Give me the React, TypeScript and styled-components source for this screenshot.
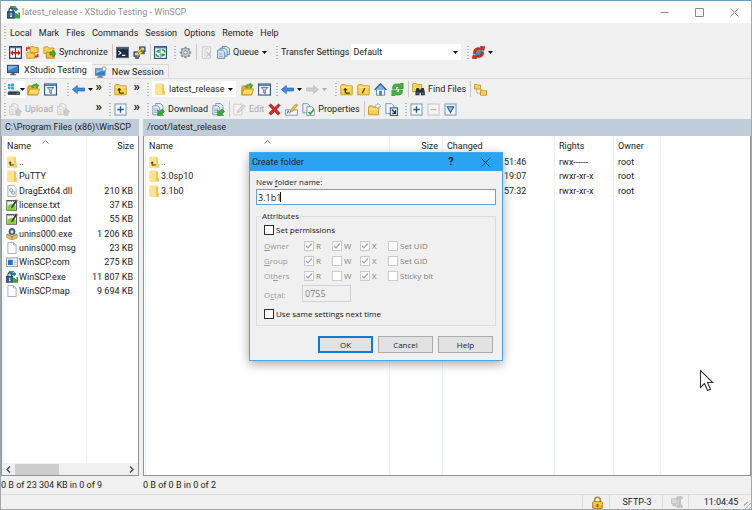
import React, { useId, useState } from 'react';
import styled, { createGlobalStyle, css } from 'styled-components';

const GlobalStyle = createGlobalStyle`
  *, *::before, *::after { box-sizing: border-box; }
  html, body { margin: 0; background: #a3a6aa; }
  body { font: 9px/12px Roboto, "Liberation Sans", sans-serif; color: #1c1c1c; cursor: default; }
  button, input, select { font: inherit; color: inherit; margin: 0; padding: 0; border: 0; border-radius: 0; background: none; }
  table { border-collapse: collapse; }
`;

/* ---------- icons ---------- */

const Svg = styled.svg<{ $size?: number }>`
  width: ${p => p.$size ?? 13}px;
  height: ${p => p.$size ?? 13}px;
  flex: none;
  display: block;
`;

const FOLDER = 'M1 3.5 2 2h4.5l1 1.5H15v11H1z';

const glyphs = {
  app: (
    <>
      <path d="M4 0h7v2H9v3H5V3H3z" fill="#3da63c" />
      <path d="M2.500 8V5a2.500 2.500 0 0 1 5 0v3" fill="none" stroke="#3a4a5c" strokeWidth="1.600" />
      <rect x="0.500" y="7" width="8.500" height="8" fill="#2c5f96" stroke="#1b3550" />
      <path d="M4 9h2l-.5 2 1 2.500h-3L4.500 11z" fill="#e8f0f8" />
      <path d="M9.500 15.500V9h2l2.500 2.500V8h2v7.500z" fill="#31a533" />
      <path d="M7 2.500h3.500V1L14 4l-3.500 3V5.500H7z" fill="#2f6fc2" />
    </>
  ),
  compare: (
    <>
      <rect x="0.800" y="0.800" width="14.400" height="14.400" fill="#fff" stroke="#27406b" strokeWidth="1.600" />
      <path d="M8 1v14" stroke="#27406b" strokeWidth="1.200" />
      <path d="M1 2h14" stroke="#4b74ad" strokeWidth="1.600" />
      <path d="M1.500 8.500 5 5V7.500h6V5l3.500 3.500L11 12V9.500H5V12z" fill="#d6201c" />
    </>
  ),
  syncDirs: (
    <>
      <path d="M5 1.500 6 .5h3.500l1 1.500H15v6H5z" fill="#f8d250" stroke="#c48a14" />
      <path d="M1 8.500l1-1h3.500l1 1.500H11v6H1z" fill="#f8d250" stroke="#c48a14" />
      <path d="M1 6V2.500h2.500" fill="none" stroke="#d3301f" strokeWidth="1.800" />
      <path d="M3 0l2.500 2.500L3 5z" fill="#d3301f" />
      <path d="M14.500 9.500V13H12" fill="none" stroke="#d3301f" strokeWidth="1.800" />
      <path d="M13 10.500 10.500 13l2.500 2.500z" fill="#d3301f" />
    </>
  ),
  sync: (
    <>
      <path d="M1 2l1-1h4l1 1.500h6.500V9H1z" fill="#f8d250" stroke="#c48a14" />
      <path d="M4 8.500l1-1h3l1 1.500h5v6H4z" fill="#f3bd33" stroke="#b97f10" />
      <path d="M8.500 7.500h3.500V5l4 4.500-4 4V11H8.500z" fill="#3fae3a" stroke="#1f7d22" strokeWidth=".8" />
    </>
  ),
  terminal: (
    <>
      <rect x="0.500" y="1.500" width="15" height="13" fill="#1d2c3d" stroke="#5c7388" />
      <path d="M1 2h14v2H1z" fill="#44586d" />
      <path d="M3 6l3 2.500L3 11M7.500 11.500h4" fill="none" stroke="#f4f7fa" strokeWidth="1.400" />
    </>
  ),
  putty: (
    <>
      <path d="M8 1h7v6H8zM10 8h4v1.500h-4z" fill="#3b5f96" stroke="#243b5d" strokeWidth=".8" />
      <path d="M1 7h7v6H1zM3 14h4v1.500H3z" fill="#3b5f96" stroke="#243b5d" strokeWidth=".8" />
      <path d="M9.300 2.300h4.400v3H9.300zM2.300 8.300h4.400v3H2.300z" fill="#c6dbef" />
      <path d="M12 1 4.500 8h3L4 14l8.500-7H9z" fill="#ffd520" stroke="#a87c00" strokeWidth=".6" />
    </>
  ),
  refreshPanes: (
    <>
      <rect x="0.700" y="0.700" width="14.600" height="14.600" fill="#fff" stroke="#2c4e86" strokeWidth="1.400" />
      <path d="M1 2h14" stroke="#4f7bbd" strokeWidth="2" />
      <path d="M8 3v12" stroke="#8ca5c8" />
      <path d="M7 3.500v5L2 7.500C3 5.500 4.500 5 5.500 5zM9 14V9l5 1c-1 2-2.500 2.500-3.500 2.500z" fill="#28a23a" />
      <path d="M2.500 9.500c0 2 1.500 3.500 4 3.500M13.500 8c0-2-1.500-3.500-4-3.500" fill="none" stroke="#28a23a" strokeWidth="1.800" />
    </>
  ),
  gear: (
    <>
      <path d="M8 1v14M1 8h14M3 3l10 10M13 3 3 13" stroke="#7f8b99" strokeWidth="2.600" />
      <circle cx="8" cy="8" r="5" fill="#c8ced6" stroke="#7f8b99" />
      <circle cx="8" cy="8" r="2.200" fill="#f0f0f0" stroke="#76828f" strokeWidth="1.200" />
    </>
  ),
  queueOff: (
    <>
      <path d="M3 1h10v14H3z" fill="#f1f1f1" stroke="#c3c3c3" />
      <path d="M5 3.500h6M5 6h3M5 8.500h2M5 11h2" stroke="#c9c9c9" />
      <path d="M8 7l5 6M13 7l-5 6" stroke="#c2c2c2" strokeWidth="1.400" />
    </>
  ),
  queue: (
    <>
      <path d="M6.500.7h6L15.300 3.500v7H6.500z" fill="#dce9f6" stroke="#4a76a8" />
      <path d="M3.700 2.700h6l2.800 2.800v7H3.700z" fill="#dce9f6" stroke="#4a76a8" />
      <path d="M.8 5h6l2.700 2.700v7.500H.8z" fill="#dce9f6" stroke="#4a76a8" />
      <path d="M2.500 9h5M2.500 11h5M2.500 13h5" stroke="#86a8cc" strokeWidth=".9" />
    </>
  ),
  globe: (
    <>
      <circle cx="8" cy="8" r="5.500" fill="#3d83cf" />
      <path d="M5 4l4-1 1 3-3 2-3 1zM8 9.500l4-1.500 1 2-3.500 3z" fill="#54b24a" />
      <path d="M1.800 9.500C1 5 4 1.800 8.500 2h2V0L16 .5 14.500 6 12.800 4.500C8 3 5 5 4.500 9z" fill="#d32a26" stroke="#96191a" strokeWidth=".5" />
      <path d="M14.200 7C15 11.500 12 14.500 7.500 14.200h-2V16L0 15.500 1.500 10.500l1.800 1.300C8 13.200 11 11 11.500 7.500z" fill="#d32a26" stroke="#96191a" strokeWidth=".5" />
    </>
  ),
  monitor: (
    <>
      <rect x="0.700" y="1.700" width="14.600" height="9.800" fill="#2f7fd3" stroke="#33475e" strokeWidth="1.300" />
      <path d="M1.500 2.500h13L1.500 8.500z" fill="#7ab7ee" />
      <path d="M6 12h4v1.500h2V15H4v-1.500h2z" fill="#4d5c6d" />
    </>
  ),
  monitorNew: (
    <>
      <rect x="0.700" y="3.700" width="12.600" height="8.600" fill="#2f7fd3" stroke="#6a7b90" strokeWidth="1.300" />
      <path d="M1.500 4.500h11L1.500 10z" fill="#8cc2f0" />
      <path d="M5 13h4v1h2v1.500H3V14h2z" fill="#6f7d8d" />
      <path d="M12 0v8M8 4h8M9.300 1.300l5.400 5.400M14.700 1.300 9.300 6.700" stroke="#7fa4c9" strokeWidth="1.300" />
      <circle cx="12" cy="4" r="2" fill="#fff" />
    </>
  ),
  drive: (
    <>
      <path d="M1 1.500 4 1v3H1zM4.700.9 8.500.3V4H4.700zM1 4.700h3v3L1 7.300zM4.700 4.700h3.800v3.700l-3.800-.6z" fill="#1fa8e8" />
      <path d="M2.500 9.500h12L16 11v3.500H1V11z" fill="#7b848e" />
      <path d="M1 11h15v3.500H1z" fill="#39424c" />
      <path d="M12 12h2.500v1.300H12z" fill="#52d95a" />
    </>
  ),
  openFolder: (
    <>
      <path d="M1 5l1-1.500h4L7 5h6v9.500H1z" fill="#eeb52c" stroke="#b98412" />
      <path d="M3.500 7.500h12L13 14.500H1z" fill="#fbdc62" stroke="#c08a14" />
      <path d="M5.500 5C6 2 9 .8 11 1.800V.3L15 3l-3.500 3V4.300C10 3.300 8 3.700 7.500 5.500z" fill="#48b53e" stroke="#23831f" strokeWidth=".6" />
    </>
  ),
  filter: (
    <>
      <rect x="0.700" y="1.200" width="14.600" height="13.600" fill="#f6fafe" stroke="#33598c" strokeWidth="1.400" />
      <path d="M1 2.700h14" stroke="#4c7cb8" strokeWidth="2" />
      <path d="M4 5.500h8L9 9v4l-2-1V9z" fill="#c6d4e4" stroke="#45607f" />
    </>
  ),
  back: <path d="M.5 8 6.500 3v3.200H15.500v3.600H6.500V13z" fill="#3c8ce4" stroke="#1c5dab" strokeWidth=".8" />,
  forwardOff: <path d="M15.500 8 9.500 3v3.200H.5v3.600h9V13z" fill="#cfcfcf" stroke="#b3b3b3" strokeWidth=".8" />,
  folderUp: (
    <>
      <path d={FOLDER} fill="#fbd44f" stroke="#c48a14" />
      <path d="M1.500 5h13" stroke="#fff0b0" />
      <path d="M7 12.500h5M6.500 12.500V8" fill="none" stroke="#3b2c00" strokeWidth="1.500" />
      <path d="M3.800 9 6.500 5.800 9.200 9z" fill="#3b2c00" />
    </>
  ),
  folderRoot: (
    <>
      <path d={FOLDER} fill="#fbd44f" stroke="#c48a14" />
      <path d="M1.500 5h13" stroke="#fff0b0" />
      <path d="M9.500 6.500 6.500 12.500" stroke="#3b2c00" strokeWidth="1.400" />
    </>
  ),
  home: (
    <>
      <path d="M3 7.500h10V15H3z" fill="#f4f8fc" stroke="#4a6b92" />
      <path d="M.7 8.500 8 1l7.300 7.500" fill="#7db0e4" stroke="#2d5b94" strokeWidth="1.600" />
      <path d="M6.500 9.500h3V15h-3z" fill="#2f74bf" />
    </>
  ),
  refresh: (
    <>
      <path d="M2 7.500V5.500C2 2.500 4 1.200 7 1.200h3.500L12.500 0 15 0v7H8l2.500-2.500H7.500c-1.500 0-2 .8-2 3z" fill="#44b53c" stroke="#218420" strokeWidth=".7" />
      <path d="M14 8.500v2c0 3-2 4.300-5 4.300H5.500L3.500 16H1V9h7l-2.500 2.500h3c1.500 0 2-.8 2-3z" fill="#44b53c" stroke="#218420" strokeWidth=".7" />
    </>
  ),
  find: (
    <>
      <path d="M.5 2l1-1.500h4l1 1.500H12v8.500H.5z" fill="#fbd44f" stroke="#c48a14" />
      <path d="M5.500 6h3l.7 2h1.600l.7-2h3l1.300 5.500V15h-5v-3H9.200v3h-5v-3.500z" fill="#2b3440" />
      <path d="M5.500 12.500h2.300M12.200 12.500h2.300" stroke="#8fa5ba" />
    </>
  ),
  tree: (
    <>
      <path d="M3.500 8v4.500H8" fill="none" stroke="#777" strokeDasharray="1.500 1" />
      <path d="M.7 1.500h2.500l1 1H8V7.500H.7z" fill="#fbd44f" stroke="#c48a14" />
      <path d="M8 8.500h2.500l1 1h4V15H8z" fill="#fbd44f" stroke="#c48a14" />
    </>
  ),
  uploadOff: (
    <>
      <path d="M3.500 1h5L11 3.500V11H3.500z" fill="#f5f5f5" stroke="#bdbdbd" />
      <path d="M1 4h5l2.500 2.500V14H1z" fill="#f5f5f5" stroke="#bdbdbd" />
      <path d="M2.500 8h4M2.500 10h4M2.500 12h4" stroke="#ccc" />
      <path d="M11.500 6.500 15.500 11H13.500v4.500h-4V11H8z" fill="#cdcdcd" stroke="#b5b5b5" strokeWidth=".7" />
    </>
  ),
  download: (
    <>
      <path d="M4.500.7h6L13.500 3.500V11h-9z" fill="#e6eff8" stroke="#6488b0" />
      <path d="M1 3.500h6L9.500 6v8.500H1z" fill="#e6eff8" stroke="#6488b0" />
      <path d="M2.500 7.500h5M2.500 9.500h5M2.500 11.500h4" stroke="#7c9fc4" />
      <path d="M7 15.500V8.500l2.200 2.200L12.500 7.500l3 3-3.300 3 2 2z" fill="#37ab34" stroke="#1c7c1e" strokeWidth=".7" />
    </>
  ),
  editOff: (
    <>
      <path d="M1 1.500h10v13H1z" fill="#f6f6f6" stroke="#c4c4c4" />
      <path d="M5 12l1-3 7-7 2.200 2L8 11z" fill="#dcdcdc" stroke="#b5b5b5" strokeWidth=".8" />
    </>
  ),
  del: <path d="M1 3 3.500 1 8 5.700 13 1l2 2-4.500 5 4.500 4.500-2.500 2.500L8 10.500 3.500 15 1 12.700 5.500 8z" fill="#d62a22" stroke="#a3140f" strokeWidth=".6" />,
  rename: (
    <>
      <rect x="0.500" y="8.500" width="15" height="6.500" fill="#f2f6fb" stroke="#6a8bb3" />
      <path d="M2.500 13l1.500-3.500L5.500 13" fill="none" stroke="#3f5f88" />
      <path d="M6.500 11.500 7.500 8l6-7 2 1.800-5.700 7z" fill="#f6c044" stroke="#a9761b" strokeWidth=".8" />
    </>
  ),
  props: (
    <>
      <path d="M1 .8h6L9.500 3.500V12H1z" fill="#e9f1f9" stroke="#6488b0" />
      <path d="M6 4.500h6L15 7.500v8H6z" fill="#f4f8fc" stroke="#6488b0" />
      <path d="M8 11l2.200 2.500L14.500 8" fill="none" stroke="#2ea52e" strokeWidth="2" />
    </>
  ),
  newFolder: (
    <>
      <path d="M.7 5l1-1.500h4l1 1.500H13v9.500H.7z" fill="#fbd44f" stroke="#c48a14" />
      <path d="M1 7.500h12" stroke="#fff0b0" />
      <path d="M12 0v8M8 4h8M9.300 1.300l5.400 5.400M14.700 1.300 9.300 6.700" stroke="#86a8c9" strokeWidth="1.200" />
      <circle cx="12" cy="4" r="1.800" fill="#fff" />
    </>
  ),
  newLink: (
    <>
      <path d="M1 .8h7l3 3V13H1z" fill="#f2f6fb" stroke="#6488b0" />
      <rect x="6.500" y="6" width="9" height="9.300" fill="#dfe9f4" stroke="#34527c" strokeWidth="1.200" />
      <path d="M8.500 8l4 4M13 8.700v4H9" fill="none" stroke="#1d2f4c" strokeWidth="1.400" />
    </>
  ),
  plus: (
    <>
      <rect x="1.200" y="1.200" width="13.600" height="13.600" fill="#f9fcff" stroke="#6b93bd" strokeWidth="1.200" />
      <path d="M8 4v8M4 8h8" stroke="#24578f" strokeWidth="1.700" />
    </>
  ),
  minusOff: (
    <>
      <rect x="1.200" y="1.200" width="13.600" height="13.600" fill="#f4f4f4" stroke="#c3c3c3" strokeWidth="1.200" />
      <path d="M4.500 8h7" stroke="#b0b0b0" strokeWidth="1.500" />
    </>
  ),
  invert: (
    <>
      <rect x="1.200" y="1.200" width="13.600" height="13.600" fill="#f4f8fc" stroke="#6b93bd" strokeWidth="1.200" />
      <path d="M4 4.500h8L8 12z" fill="#a9c2dc" stroke="#24578f" strokeWidth="1.300" />
    </>
  ),
  paleFolder: (
    <>
      <path d="M2 1h10l1.500 1.500V10l1.500 1v4.500H2z" fill="#f5cf62" />
      <path d="M2 1h8.500v14.500H2z" fill="#fde293" />
      <path d="M12 2.500V15" stroke="#e9b93d" />
    </>
  ),
  paleUp: (
    <>
      <path d="M2 1h10l1.500 1.500V10l1.500 1v4.500H2z" fill="#f5cf62" />
      <path d="M2 1h8.500v14.500H2z" fill="#fde293" />
      <path d="M5.500 12h5M5.500 12.500V9" fill="none" stroke="#3b2c00" strokeWidth="1.300" />
      <path d="M3.500 9.500l2-2.500 2 2.500z" fill="#3b2c00" />
    </>
  ),
  dll: (
    <>
      <path d="M2.500.7h8L13.500 4v11.300h-11z" fill="#f8f8f8" stroke="#9a9a9a" />
      <circle cx="7" cy="7" r="2.200" fill="#dfe7ee" stroke="#7d93a8" />
      <circle cx="9.500" cy="10.500" r="2.200" fill="#dfe7ee" stroke="#7d93a8" />
    </>
  ),
  note: (
    <>
      <rect x="1" y="2" width="13" height="13" fill="#fbfbf6" stroke="#4a5548" strokeWidth="1.200" />
      <path d="M2 2.500h11" stroke="#4a5548" strokeWidth="2" strokeDasharray="1.500 1" />
      <path d="M2 9l5-3 6 3v5.500H2z" fill="#8bcf34" />
      <path d="M6.500 12.500 7.500 9.500 13 1l2 1.300L9.500 11z" fill="#3a3a33" />
      <path d="M12.300 2 13.300.3l2.500 1.600L14.800 3.500z" fill="#e0452b" />
    </>
  ),
  installer: (
    <>
      <path d="M1 8.500 8 6l7 2.500v4.500l-7 3-7-3z" fill="#e2bd78" stroke="#997437" strokeWidth=".7" />
      <path d="M1 8.500l7 3 7-3M8 11.500V16" fill="none" stroke="#8c6a31" strokeWidth=".8" />
      <circle cx="8" cy="4.500" r="4" fill="#4c6e95" stroke="#2a4361" />
      <path d="M6.500 4.500a1.500 1.500 0 0 1 3 0V7h-3z" fill="#e6edf5" />
    </>
  ),
  blank: (
    <>
      <path d="M2.500.7h7.500L13.500 4v11.300h-11z" fill="#fdfdfd" stroke="#9b9b9b" />
      <path d="M10 .7V4h3.500" fill="none" stroke="#9b9b9b" />
    </>
  ),
  com: (
    <>
      <rect x="0.600" y="2.600" width="14.800" height="11.300" fill="#fdfdfd" stroke="#8d949b" strokeWidth="1.200" />
      <rect x="2.500" y="5" width="6.500" height="7" fill="#1b73cf" />
      <path d="M10 6.500h4M10 8.700h4M10 11h4" stroke="#8aa7c5" />
    </>
  ),
  lock: (
    <>
      <path d="M4.500 8V5a3.500 3.500 0 0 1 7 0v3" fill="none" stroke="#b98a1c" strokeWidth="2" />
      <rect x="2" y="7" width="12" height="8.500" rx="1" fill="#f3b71e" stroke="#a87408" />
      <path d="M2.800 8.500h10.400M2.800 10.500h3M10 10.500h3" stroke="#fbdf78" />
      <path d="M7 10h2v3.500H7z" fill="#7b5203" />
    </>
  ),
  compressOff: (
    <>
      <path d="M.8 3.500h7.500v7H.8zM2.500 11.500h4V13h-4z" fill="#d8d8d8" stroke="#b5b5b5" />
      <path d="M8 1h7v2.500L12.500 5v6l2.500 1.500V15H8v-2.500L10.500 11V5L8 3.500z" fill="#c9c9c9" stroke="#a9a9a9" strokeWidth=".8" />
    </>
  ),
};

type GlyphName = keyof typeof glyphs;

const Icon = ({ name, size }: { name: GlyphName; size?: number }) => (
  <Svg $size={size} viewBox="0 0 16 16" aria-hidden="true">{glyphs[name]}</Svg>
);

const ArrowSvg = styled.svg`
  width: 5px;
  height: 3px;
  flex: none;
  display: block;
`;
const Caret = ({ off }: { off?: boolean }) => (
  <ArrowSvg viewBox="0 0 5 3" aria-hidden="true"><path d="M0 0h5L2.500 3z" fill={off ? '#aaa' : '#111'} /></ArrowSvg>
);

/* ---------- window frame ---------- */

const Window = styled.main`
  position: relative;
  display: flex;
  flex-direction: column;
  min-height: calc(100vh - 1px);
  margin: 0 1px 1px;
  background: #f0f0f0;
  border-top: 1px solid #6c9cbc;
`;

const TitleBar = styled.header`
  display: flex;
  align-items: center;
  gap: 2px;
  height: 22px;
  padding-left: 6px;
  background: #fff;
  color: #8f8f8f;
`;
const Title = styled.h1`
  flex: 1;
  margin: 0;
  font: inherit;
`;
const CaptionButton = styled.button`
  display: grid;
  place-items: center;
  width: 33px;
  height: 22px;
`;
const CaptionSvg = styled.svg`
  width: 9px;
  height: 9px;
  fill: none;
  stroke: #8a8a8a;
`;

const MenuBar = styled.nav`
  display: flex;
  align-items: center;
  height: 19px;
  padding-left: 2px;
`;
const MenuButton = styled.button`
  padding: 0 4px 0 3px;
`;

const ToolRow = styled.div`
  display: flex;
  align-items: center;
  height: 20px;
`;
const Band = styled.div<{ $width?: number }>`
  display: flex;
  align-items: center;
  flex: none;
  height: 20px;
  padding-left: 2px;
  ${p => p.$width ? css`width: ${p.$width}px;` : css`flex: 1;`}
`;
const Grip = styled.span`
  flex: none;
  width: 2px;
  height: 13px;
  margin: 0 1px;
  background: repeating-linear-gradient(#b9b9b9 0 1px, transparent 1px 3px);
`;
const ToolButton = styled.button<{ $field?: boolean }>`
  display: flex;
  align-items: center;
  flex: none;
  gap: 3px;
  height: 17px;
  padding: 0 2px;
  white-space: nowrap;
  ${p => p.$field && css`
    gap: 0;
    padding: 0;
    background: #fff;
  `}
  &:disabled { color: #a8a8a8; }
`;
const Separator = styled.span`
  flex: none;
  width: 1px;
  height: 16px;
  margin: 0 1px 0 2px;
  background: #c6c6c6;
`;
const More = styled.button`
  height: 17px;
  margin-left: auto;
  padding: 0 4px 6px 0;
  font: bold 13px/11px Roboto, sans-serif;
`;

interface ToolProps { icon: GlyphName; label?: string; title?: string; off?: boolean; drop?: boolean; field?: boolean }
const Tool = ({ icon, label, title, off, drop, field }: ToolProps) => (
  <ToolButton type="button" disabled={off} aria-label={label ?? title} $field={field}>
    <Icon name={icon} />
    {label}
    {drop && <Caret off={off} />}
  </ToolButton>
);

const Combo = styled.div<{ $width: number }>`
  display: flex;
  align-items: center;
  width: ${p => p.$width}px;
  height: 16px;
  margin: 0 3px 0 2px;
  padding: 0 3px 0 2px;
  gap: 3px;
  background: #fff;
`;
const ComboSelect = styled.select`
  appearance: none;
  flex: 1;
  min-width: 0;
  height: 14px;
  outline: none;
`;
const ComboLabel = styled.label`
  padding: 0 0 0 2px;
  white-space: nowrap;
`;

const Tabs = styled.div`
  display: flex;
  align-items: flex-end;
  height: 17px;
  border-bottom: 1px solid #dcdcdc;
`;
const Tab = styled.button<{ $active?: boolean }>`
  display: flex;
  align-items: center;
  gap: 5px;
  height: 14px;
  padding: 0 4px 0 3px;
  border: 1px solid #dadada;
  border-width: 1px 1px 0 0;
  ${p => p.$active && css`
    height: 16px;
    padding: 0 5px 0 6px;
    background: #fff;
    border-width: 0;
  `}
`;

/* ---------- file panels ---------- */

const Panels = styled.div`
  display: flex;
  flex: 1;
  gap: 4px;
`;
const Panel = styled.section<{ $width?: number }>`
  display: flex;
  flex-direction: column;
  ${p => p.$width ? css`flex: 0 0 ${p.$width}px;` : css`flex: 1; min-width: 0;`}
`;
const PathBar = styled.h2`
  margin: 0;
  height: 17px;
  padding: 0 4px;
  font: inherit;
  line-height: 17px;
  background: #bfcddb;
  white-space: nowrap;
`;
const ListBox = styled.div`
  display: flex;
  flex-direction: column;
  flex: 1;
  border: 1px solid #8f949c;
  border-top: 0;
  background: #fff;
`;
const Columns = styled.div<{ $stops: number[] }>`
  flex: 1;
  background-image: ${p => p.$stops.map(() => 'linear-gradient(#e9f2fb, #e9f2fb)').join(',')};
  background-size: 1px 100%;
  background-repeat: no-repeat;
  background-position: ${p => p.$stops.map(s => `${s}px 0`).join(',')};
`;
const FileTable = styled.table`
  table-layout: fixed;
  width: 100%;
`;
const HeadCell = styled.th<{ $right?: boolean }>`
  height: 19px;
  padding: 0 4px 0 5px;
  font-weight: normal;
  text-align: ${p => (p.$right ? 'right' : 'left')};
`;
const SortMark = styled.svg`
  display: block;
  width: 7px;
  height: 4px;
  margin: 0 auto -4px;
  fill: none;
  stroke: #7a7a7a;
`;
const FileRows = styled.tbody<{ $height: number }>`
  height: ${p => p.$height}px;
`;
const Cell = styled.td<{ $right?: boolean; $indent?: number }>`
  height: 14px;
  padding: 0 5px 0 ${p => p.$indent ?? 4}px;
  text-align: ${p => (p.$right ? 'right' : 'left')};
  white-space: nowrap;
  line-height: 14px;
`;
const FileName = styled.span`
  display: flex;
  align-items: center;
  gap: 1px;
  height: 14px;
`;
const Col = styled.col<{ $width?: number }>`
  ${p => p.$width && css`width: ${p.$width}px;`}
`;
const PanelStatus = styled.p`
  margin: 0;
  height: 18px;
  line-height: 19px;
  white-space: nowrap;
`;

const ScrollBar = styled.div`
  display: flex;
  align-items: center;
  height: 12px;
  background: #f0f0f0;
`;
const ScrollButton = styled.button`
  display: grid;
  place-items: center;
  width: 13px;
  height: 12px;
`;
const ScrollTrack = styled.div`
  flex: 1;
`;
const ScrollThumb = styled.div`
  width: 40%;
  height: 11px;
  background: #cdcdcd;
`;
const ChevronSvg = styled.svg`
  width: 5px;
  height: 7px;
  fill: none;
  stroke: #4d4d4d;
  stroke-width: 1.500;
`;

const StatusBar = styled.footer`
  display: flex;
  height: 15px;
  gap: 2px;
  border-top: 1px solid #dcdcdc;
`;
const StatusCell = styled.div<{ $width?: number }>`
  display: grid;
  place-items: center;
  height: 14px;
  border-right: 1px solid #dcdcdc;
  ${p => p.$width ? css`width: ${p.$width}px;` : css`flex: 1;`}
`;
const ClockCell = styled(StatusCell)`
  border-right: 0;
  background: repeating-linear-gradient(135deg, transparent 0 2px, #aaa 2px 3px) no-repeat right bottom / 7px 7px;
`;

/* ---------- dialog ---------- */

const Overlay = styled.div`
  position: absolute;
  top: 151px;
  left: 0;
  right: 0;
  display: flex;
  justify-content: center;
  pointer-events: none;
`;
const Dialog = styled.form`
  width: 254px;
  pointer-events: auto;
  border: 1px solid #3fa9ea;
  background: #f0f0f0;
  box-shadow: 0 3px 10px rgba(0, 0, 0, 0.35);
  font: 8px/10px "Open Sans", "Noto Sans", sans-serif;
`;
const DialogTitle = styled.header`
  display: flex;
  align-items: center;
  height: 18px;
  background: #2aa4f1;
  font: 9px/12px Roboto, sans-serif;
  padding-left: 2px;
`;
const DialogCaption = styled.button`
  display: grid;
  place-items: center;
  width: 34px;
  height: 18px;
  font-weight: bold;
  font-size: 11px;
`;
const DialogBody = styled.div`
  display: flex;
  flex-direction: column;
  padding: 5px 6px 7px 6px;
`;
const NameLabel = styled.label`
  line-height: 12px;
`;
const NameInput = styled.input`
  height: 16px;
  margin: 1px 0 5px;
  padding: 0 1px;
  border: 1px solid #62a5dd;
  background: linear-gradient(#111, #111) no-repeat 23px 2px / 1px 10px #fff;
  caret-color: transparent;
  outline: none;
  font-size: 9px;
`;
const Group = styled.fieldset`
  margin: 0 0 10px;
  padding: 0 6px 4px 7px;
  border: 1px solid #dcdcdc;
  min-width: 0;
`;
const Legend = styled.legend`
  margin-left: -3px;
  padding: 0 1px;
  line-height: 12px;
`;
const CheckLabel = styled.label<{ $off?: boolean }>`
  display: flex;
  align-items: center;
  gap: 2px;
  height: 15px;
  color: ${p => (p.$off ? '#7f7f7f' : '#111')};
`;
const TickWrap = styled.span`
  display: grid;
  & > * { grid-area: 1 / 1; }
`;
const TickBox = styled.input`
  appearance: none;
  width: 10px;
  height: 10px;
  border: 1px solid #2f2f2f;
  background: #fff;
  &:disabled { border-color: #cbcbcb; }
  & + svg { visibility: hidden; }
  &:checked + svg { visibility: visible; }
`;
const TickSvg = styled.svg<{ $off?: boolean }>`
  width: 10px;
  height: 10px;
  fill: none;
  stroke: ${p => (p.$off ? '#a2a2a2' : '#222')};
  stroke-width: 1.200;
  pointer-events: none;
`;
const RightsGrid = styled.div`
  display: grid;
  grid-template-columns: 40px 28px 28px 28px 1fr;
  align-items: center;
  padding-top: 1px;
  color: #9a9a9a;
`;
const OctalInput = styled.input`
  width: 49px;
  height: 17px;
  margin: 2px 0 4px -2px;
  padding: 0 2px;
  border: 1px solid #d2d2d2;
  color: #7f7f7f;
  font-size: 9px;
`;
const Actions = styled.div`
  display: flex;
  justify-content: flex-end;
  gap: 5px;
  padding-right: 3px;
`;
const PushButton = styled.button<{ $primary?: boolean }>`
  width: 55px;
  height: 17px;
  border: 1px solid #ababab;
  background: #e2e2e2;
  ${p => p.$primary && css`border: 2px solid #0f79d6;`}
`;

const Pointer = styled.svg`
  position: absolute;
  left: 697px;
  top: 367px;
  width: 16px;
  height: 25px;
  pointer-events: none;
`;

const Check = ({ label, checked, off }: { label: string; checked?: boolean; off?: boolean }) => (
  <CheckLabel $off={off}>
    <TickWrap>
      <TickBox type="checkbox" defaultChecked={checked} disabled={off} />
      <TickSvg $off={off} viewBox="0 0 10 10"><path d="M2 5l2 2 4-4.500" /></TickSvg>
    </TickWrap>
    {label}
  </CheckLabel>
);

/* ---------- data ---------- */

const menus = ['Local', 'Mark', 'Files', 'Commands', 'Session', 'Options', 'Remote', 'Help'];

const localFiles: { icon: GlyphName; name: string; size: string }[] = [
  { icon: 'paleUp', name: '..', size: '' },
  { icon: 'paleFolder', name: 'PuTTY', size: '' },
  { icon: 'dll', name: 'DragExt64.dll', size: '210 KB' },
  { icon: 'note', name: 'license.txt', size: '37 KB' },
  { icon: 'note', name: 'unins000.dat', size: '55 KB' },
  { icon: 'installer', name: 'unins000.exe', size: '1 206 KB' },
  { icon: 'blank', name: 'unins000.msg', size: '23 KB' },
  { icon: 'com', name: 'WinSCP.com', size: '275 KB' },
  { icon: 'app', name: 'WinSCP.exe', size: '11 807 KB' },
  { icon: 'blank', name: 'WinSCP.map', size: '9 694 KB' },
];

const remoteFiles: { icon: GlyphName; name: string; changed: string; rights: string }[] = [
  { icon: 'paleUp', name: '..', changed: '51:46', rights: 'rwx------' },
  { icon: 'paleFolder', name: '3.0sp10', changed: '19:07', rights: 'rwxr-xr-x' },
  { icon: 'paleFolder', name: '3.1b0', changed: '57:32', rights: 'rwxr-xr-x' },
];

const rights = [
  { who: <><u>O</u>wner</>, bits: [true, true, true], special: 'Set UID' },
  { who: <><u>G</u>roup</>, bits: [true, false, true], special: 'Set GID' },
  { who: <>Ot<u>h</u>ers</>, bits: [true, false, true], special: 'Sticky bit' },
];

const Sort = () => <SortMark viewBox="0 0 7 4" aria-hidden="true"><path d="M.5 3.500l3-3 3 3" /></SortMark>;

function CreateFolderDialog() {
  const nameId = useId();
  const octalId = useId();
  const [name, setName] = useState('3.1b1');
  return (
    <Overlay>
      <Dialog role="dialog" aria-label="Create folder" onSubmit={e => e.preventDefault()}>
        <DialogTitle>
          <Title>Create folder</Title>
          <DialogCaption type="button" aria-label="Context help">?</DialogCaption>
          <DialogCaption type="button" aria-label="Close">
            <Svg $size={9} viewBox="0 0 9 9"><path d="M.5.5l8 8M8.500.5l-8 8" stroke="#10202c" /></Svg>
          </DialogCaption>
        </DialogTitle>
        <DialogBody>
          <NameLabel htmlFor={nameId}>New <u>f</u>older name:</NameLabel>
          <NameInput id={nameId} value={name} onChange={e => setName(e.target.value)} autoFocus />
          <Group>
            <Legend>Attributes</Legend>
            <Check label="Set permissions" />
            <RightsGrid>
              {rights.map(row => (
                <React.Fragment key={row.special}>
                  <span>{row.who}</span>
                  {row.bits.map((on, i) => <Check key={i} label={'RWX'[i]} checked={on} off />)}
                  <Check label={row.special} off />
                </React.Fragment>
              ))}
              <label htmlFor={octalId}>O<u>c</u>tal:</label>
              <OctalInput id={octalId} defaultValue="0755" disabled />
            </RightsGrid>
            <Check label="Use same settings next time" />
          </Group>
          <Actions>
            <PushButton type="submit" $primary>OK</PushButton>
            <PushButton type="button">Cancel</PushButton>
            <PushButton type="button">Help</PushButton>
          </Actions>
        </DialogBody>
      </Dialog>
    </Overlay>
  );
}

export default function App() {
  const transferId = useId();
  return (
    <>
      <GlobalStyle />
      <Window>
        <TitleBar>
          <Icon name="app" />
          <Title>latest_release - XStudio Testing - WinSCP</Title>
          <CaptionButton type="button" aria-label="Minimize"><CaptionSvg viewBox="0 0 9 9"><path d="M.5 4.500h8" /></CaptionSvg></CaptionButton>
          <CaptionButton type="button" aria-label="Maximize"><CaptionSvg viewBox="0 0 9 9"><path d="M.5.5h8v8h-8z" /></CaptionSvg></CaptionButton>
          <CaptionButton type="button" aria-label="Close"><CaptionSvg viewBox="0 0 9 9"><path d="M.5.5l8 8M8.500.5l-8 8" /></CaptionSvg></CaptionButton>
        </TitleBar>

        <MenuBar>
          <Grip />
          {menus.map(m => <MenuButton type="button" key={m}>{m}</MenuButton>)}
        </MenuBar>

        <ToolRow>
          <Band $width={170}>
            <Grip />
            <Tool icon="compare" title="Compare directories" />
            <Tool icon="syncDirs" title="Synchronize browsing" />
            <Tool icon="sync" label="Synchronize" />
            <Separator />
            <Tool icon="terminal" title="Open terminal" />
            <Tool icon="putty" title="Open in PuTTY" />
            <Separator />
            <Tool icon="refreshPanes" title="Refresh panels" />
          </Band>
          <Band $width={102}>
            <Grip />
            <Tool icon="gear" title="Preferences" />
            <Separator />
            <Tool icon="queueOff" title="Queue item" off />
            <Tool icon="queue" label="Queue" drop />
          </Band>
          <Band $width={191}>
            <Grip />
            <ComboLabel htmlFor={transferId}>Transfer Settings</ComboLabel>
            <Combo $width={112}>
              <ComboSelect id={transferId}><option>Default</option></ComboSelect>
              <Caret />
            </Combo>
          </Band>
          <Band>
            <Grip />
            <Tool icon="globe" title="Check for updates" drop />
          </Band>
        </ToolRow>

        <Tabs role="tablist">
          <Tab type="button" role="tab" aria-selected="true" $active><Icon name="monitor" size={12} />XStudio Testing</Tab>
          <Tab type="button" role="tab" aria-selected="false"><Icon name="monitorNew" size={12} />New Session</Tab>
        </Tabs>

        <ToolRow>
          <Band $width={63}>
            <Grip />
            <Tool icon="drive" title="Drive" drop field />
            <Tool icon="openFolder" title="Open directory" />
            <Tool icon="filter" title="Filter" />
          </Band>
          <Band $width={42}>
            <Grip />
            <Tool icon="back" title="Back" drop />
            <More type="button" aria-label="More">»</More>
          </Band>
          <Band $width={38}>
            <Grip />
            <Tool icon="folderUp" title="Parent directory" />
            <More type="button" aria-label="More">»</More>
          </Band>
          <Band $width={129}>
            <Grip />
            <Combo $width={84}>
              <Icon name="paleFolder" size={12} />
              <ComboSelect aria-label="Remote directory"><option>latest_release</option></ComboSelect>
              <Caret />
            </Combo>
            <Tool icon="openFolder" title="Open directory" />
            <Tool icon="filter" title="Filter" />
          </Band>
          <Band $width={59}>
            <Grip />
            <Tool icon="back" title="Back" drop />
            <Tool icon="forwardOff" title="Forward" drop off />
          </Band>
          <Band>
            <Grip />
            <Tool icon="folderUp" title="Parent directory" />
            <Tool icon="folderRoot" title="Root directory" />
            <Tool icon="home" title="Home directory" />
            <Tool icon="refresh" title="Refresh" />
            <Separator />
            <Tool icon="find" label="Find Files" />
            <Separator />
            <Tool icon="tree" title="Tree" />
          </Band>
        </ToolRow>

        <ToolRow>
          <Band $width={105}>
            <Grip />
            <Tool icon="uploadOff" label="Upload" off />
            <Tool icon="uploadOff" title="Upload and delete" off />
            <More type="button" aria-label="More">»</More>
          </Band>
          <Band $width={38}>
            <Grip />
            <Tool icon="plus" title="Select files" />
            <More type="button" aria-label="More">»</More>
          </Band>
          <Band $width={258}>
            <Grip />
            <Tool icon="download" label="Download" />
            <Tool icon="download" title="Download and delete" />
            <Separator />
            <Tool icon="editOff" label="Edit" off />
            <Tool icon="del" title="Delete" />
            <Tool icon="rename" title="Rename" />
            <Tool icon="props" label="Properties" />
            <Separator />
            <Tool icon="newFolder" title="Create directory" />
            <Tool icon="newLink" title="Create link" />
          </Band>
          <Band>
            <Grip />
            <Tool icon="plus" title="Select files" />
            <Tool icon="minusOff" title="Unselect files" off />
            <Tool icon="invert" title="Invert selection" />
          </Band>
        </ToolRow>

        <Panels>
          <Panel $width={138}>
            <PathBar>C:\Program Files (x86)\WinSCP</PathBar>
            <ListBox>
              <Columns $stops={[1, 84]}>
                <FileTable>
                  <colgroup><Col $width={85} /><Col /></colgroup>
                  <thead><tr><HeadCell><Sort />Name</HeadCell><HeadCell $right>Size</HeadCell></tr></thead>
                  <FileRows $height={143}>
                    {localFiles.map(f => (
                      <tr key={f.name}>
                        <Cell><FileName><Icon name={f.icon} size={12} />{f.name}</FileName></Cell>
                        <Cell $right>{f.size}</Cell>
                      </tr>
                    ))}
                  </FileRows>
                </FileTable>
              </Columns>
              <ScrollBar>
                <ScrollButton type="button" aria-label="Scroll left"><ChevronSvg viewBox="0 0 5 7"><path d="M4 .5l-3 3 3 3" /></ChevronSvg></ScrollButton>
                <ScrollTrack><ScrollThumb /></ScrollTrack>
                <ScrollButton type="button" aria-label="Scroll right"><ChevronSvg viewBox="0 0 5 7"><path d="M1 .5l3 3-3 3" /></ChevronSvg></ScrollButton>
              </ScrollBar>
            </ListBox>
            <PanelStatus>0 B of 23 304 KB in 0 of 9</PanelStatus>
          </Panel>
          <Panel>
            <PathBar>/root/latest_release</PathBar>
            <ListBox>
              <Columns $stops={[1, 245, 298, 410, 469, 516]}>
                <FileTable>
                  <colgroup><Col $width={245} /><Col $width={53} /><Col $width={112} /><Col $width={59} /><Col $width={47} /><Col /></colgroup>
                  <thead>
                    <tr>
                      <HeadCell><Sort />Name</HeadCell>
                      <HeadCell $right>Size</HeadCell>
                      <HeadCell>Changed</HeadCell>
                      <HeadCell>Rights</HeadCell>
                      <HeadCell>Owner</HeadCell>
                      <HeadCell aria-hidden="true" />
                    </tr>
                  </thead>
                  <FileRows $height={43}>
                    {remoteFiles.map(f => (
                      <tr key={f.name}>
                        <Cell><FileName><Icon name={f.icon} size={12} />{f.name}</FileName></Cell>
                        <Cell />
                        <Cell $indent={62}>{f.changed}</Cell>
                        <Cell $indent={5}>{f.rights}</Cell>
                        <Cell $indent={5}>root</Cell>
                        <Cell />
                      </tr>
                    ))}
                  </FileRows>
                </FileTable>
              </Columns>
            </ListBox>
            <PanelStatus>0 B of 0 B in 0 of 2</PanelStatus>
          </Panel>
        </Panels>

        <StatusBar>
          <StatusCell />
          <StatusCell $width={25}><Icon name="lock" /></StatusCell>
          <StatusCell $width={51}>SFTP-3</StatusCell>
          <StatusCell $width={24}><Icon name="compressOff" size={12} /></StatusCell>
          <ClockCell $width={60}>11:04:45</ClockCell>
        </StatusBar>

        <CreateFolderDialog />
        <Pointer viewBox="0 0 16 25" aria-hidden="true">
          <path d="M2.500 2.500v17l4-4 3 7 3-1.300-3-6.700h5.300z" fill="#fff" stroke="#333" strokeWidth="1.100" />
        </Pointer>
      </Window>
    </>
  );
}
